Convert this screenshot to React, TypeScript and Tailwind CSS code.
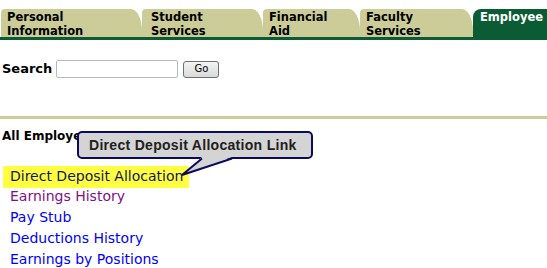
export default function App() {
  const tabs = [
    { label: ["Personal", "Information"], w: "w-[141px]", pl: "pl-[6px]" },
    { label: ["Student", "Services"], w: "w-[121px]", pl: "pl-[9px]" },
    { label: ["Financial", "Aid"], w: "w-[97px]", pl: "pl-[6px]" },
    { label: ["Faculty", "Services"], w: "w-[113px]", pl: "pl-[6px]" },
  ];

  return (
    <div className="w-[547px] h-[268px] overflow-hidden bg-white font-['DejaVu_Sans',sans-serif] text-black">
      {/* Tabs */}
      <div className="flex pt-[9px] pl-[1px]">
        {tabs.map((t) => (
          <div
            key={t.label[0]}
            className={`${t.w} ${t.pl} h-[28px] bg-[#cccc99] rounded-tl-[4px] rounded-tr-[11px_22px] pt-[1px] text-[11.5px] font-bold leading-[14px]`}
          >
            {t.label[0]}
            <br />
            {t.label[1]}
          </div>
        ))}
        <div className="flex-1 h-[28px] bg-[#0b5c35] rounded-tl-[8px] pl-[7px] pt-[1px] text-[11.5px] font-bold leading-[14px] text-white">
          Employee
        </div>
      </div>
      <div className="h-[3px] bg-[#0b5c35]" />

      {/* Search */}
      <div className="flex items-center h-[36px] mt-[11px] pl-[2px]">
        <span className="text-[13px] font-bold">Search</span>
        <input
          type="text"
          className="ml-[4px] w-[122px] h-[18px] border border-[#b5bac2] rounded-[2px] bg-white"
        />
        <button className="ml-[5px] w-[36px] h-[17px] border border-[#707070] rounded-[3px] bg-gradient-to-b from-[#f4f4f4] to-[#dadada] text-[10px] leading-none text-black">
          Go
        </button>
      </div>

      <div className="h-[3px] bg-[#cccc99] mt-[29px]" />

      {/* Employee links */}
      <div className="relative">
        <div className="pl-[2px] pt-[10px] text-[12px] font-bold leading-[14px]">All Employee</div>

        <div className="flex flex-col mt-[23px] text-[14px] leading-[21px]">
          <div className="ml-[3px] w-[186px] h-[22px] pl-[7px] bg-[#ffff40] text-[#14145a]">
            Direct Deposit Allocation
          </div>
          <div className="-mt-[2px] pl-[10px] text-[#80108a]">Earnings History</div>
          <div className="pl-[10px] text-[#0000ff]">Pay Stub</div>
          <div className="pl-[10px] text-[#0000ff]">Deductions History</div>
          <div className="pl-[10px] text-[#0000ff]">Earnings by Positions</div>
        </div>

        {/* Callout */}
        <div className="absolute left-[77px] top-[12px] w-[236px] h-[28px] rounded-[5px] border-2 border-[#0a0a5e] bg-[#d4d4d4] pl-[10px] font-['Liberation_Sans',sans-serif] text-[14px] font-bold leading-[24px] tracking-[0.3px] text-[#202020]">
          Direct Deposit Allocation Link
        </div>
        <svg className="absolute left-0 top-0" width="300" height="70" viewBox="0 119 300 70">
          <polygon points="202,157 182,175 232,157" fill="#d4d4d4" />
          <polyline points="202,158.5 182,175 232,158.5" fill="none" stroke="#0a0a5e" strokeWidth="2" />
        </svg>
      </div>
    </div>
  );
}
